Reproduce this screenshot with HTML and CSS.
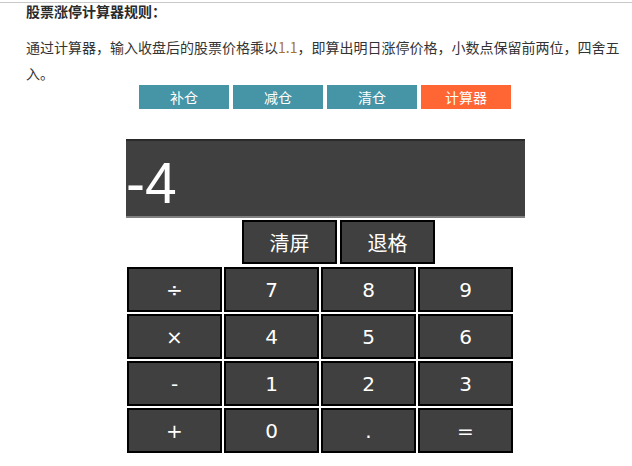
FILE: index.html
```html
<!DOCTYPE html>
<html lang="zh">
<head>
<meta charset="utf-8">
<title>股票涨停计算器</title>
<link rel="stylesheet" href="styles.css">
</head>
<body>
<div class="topline"></div>
<div class="intro">
  <div class="title">股票涨停计算器规则：</div>
  <p class="desc">通过计算器，输入收盘后的股票价格乘以<span class="num">1.1</span>，即算出明日涨停价格，小数点保留前两位，四舍五入。</p>
</div>
<div class="tabs">
  <div class="tab">补仓</div>
  <div class="tab">减仓</div>
  <div class="tab">清仓</div>
  <div class="tab active">计算器</div>
</div>
<div class="calc">
  <div class="screen">-4</div>
  <div class="ctrls">
    <div class="key ctrl">清屏</div>
    <div class="key ctrl">退格</div>
  </div>
  <div class="pad">
    <div class="key">÷</div><div class="key">7</div><div class="key">8</div><div class="key">9</div>
    <div class="key">×</div><div class="key">4</div><div class="key">5</div><div class="key">6</div>
    <div class="key">-</div><div class="key">1</div><div class="key">2</div><div class="key">3</div>
    <div class="key">+</div><div class="key">0</div><div class="key">.</div><div class="key">=</div>
  </div>
</div>
</body>
</html>
```
FILE: styles.css
```css
html, body {
  margin: 0;
  padding: 0;
  background: #fff;
}
body {
  font-family: "Noto Sans CJK SC", "DejaVu Sans", sans-serif;
  color: #333;
}
.topline {
  margin-top: 2px;
  height: 1px;
  background: #c8c8c8;
}
.intro {
  padding-left: 26px;
}
.title {
  font-size: 14px;
  font-weight: bold;
  line-height: 16px;
  color: #2a2a2a;
}
.desc {
  margin: 15px 0 0 0;
  font-size: 14px;
  line-height: 26px;
  color: #333;
  padding-right: 8px;
}
.num {
  color: #a8742a;
}
.tabs {
  display: flex;
  gap: 4px;
  margin: -1px 0 0 139px;
}
.tab {
  width: 90px;
  height: 24px;
  line-height: 24px;
  text-align: center;
  font-size: 14px;
  color: #fff;
  background: #4595a6;
}
.tab.active {
  background: #ff6633;
}
.calc {
  margin: 30px 0 0 126px;
  width: 400px;
}
.screen {
  box-sizing: border-box;
  width: 399px;
  height: 79px;
  border-top: 2px solid #2a2a2a;
  border-bottom: 2px solid #808080;
  background: #404040;
  color: #fff;
  font-family: "Liberation Sans", Arial, sans-serif;
  font-size: 57px;
  padding-top: 10px;
  line-height: 65px;
  overflow: hidden;
}
.ctrls {
  display: flex;
  gap: 3px;
  margin: 2px 0 0 116px;
}
.key {
  box-sizing: border-box;
  width: 95px;
  height: 45px;
  border: 2px solid #000;
  background: #404040;
  color: #fff;
  display: flex;
  align-items: center;
  justify-content: center;
  font-family: "DejaVu Sans", sans-serif;
  font-size: 20px;
}
.key.ctrl {
  height: 44px;
  font-family: "Noto Sans CJK SC", sans-serif;
  font-size: 20px;
}
.pad {
  display: grid;
  grid-template-columns: repeat(4, 95px);
  grid-auto-rows: 45px;
  gap: 2px;
  margin: 3px 0 0 1px;
}
```
